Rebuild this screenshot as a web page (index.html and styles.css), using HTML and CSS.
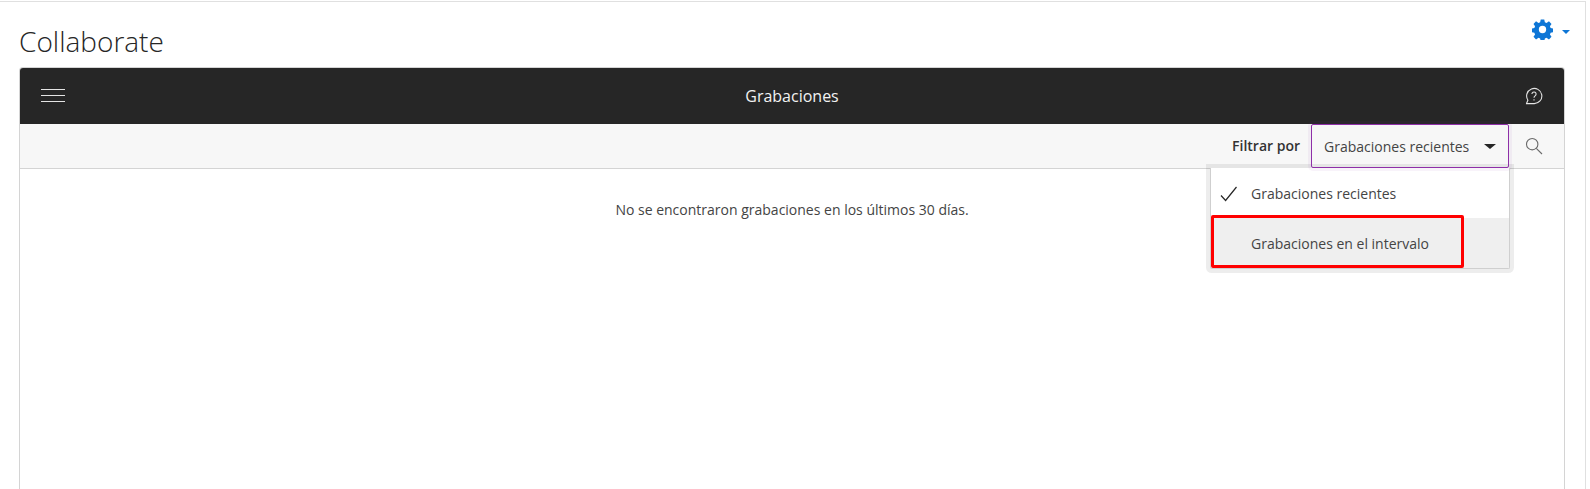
FILE: index.html
```html
<!DOCTYPE html>
<html lang="es">
<head>
    <meta charset="UTF-8">
    <meta name="viewport" content="width=device-width, initial-scale=1.0">
    <title>Collaborate</title>
    <link rel="stylesheet" href="styles.css">
</head>
<body>
    <div class="page">
        <div class="page-head">
            <h1>Collaborate</h1>
            <div class="settings">
                <svg class="gear" viewBox="0 0 24 24" width="21" height="21">
                    <path fill="#0e76d6" fill-rule="evenodd" d="M10 .5h4l.7 3.2 1.9.8 2.8-1.8 2.9 2.9-1.8 2.8.8 1.9 3.2.7v4l-3.2.7-.8 1.9 1.8 2.8-2.9 2.9-2.8-1.8-1.9.8-.7 3.2h-4l-.7-3.2-1.9-.8-2.8 1.8-2.9-2.9 1.8-2.8-.8-1.9-3.2-.7v-4l3.2-.7.8-1.9-1.8-2.8 2.9-2.9 2.8 1.8 1.9-.8zM12 7.8a4.2 4.2 0 1 0 0 8.4 4.2 4.2 0 0 0 0-8.4z"/>
                </svg>
                <span class="caret caret-blue"></span>
            </div>
        </div>

        <div class="panel">
            <div class="panel-header">
                <svg class="menu-icon" viewBox="0 0 24 14" width="24" height="14">
                    <path stroke="#e4e4e4" stroke-width="1" d="M0 .5h24M0 6.5h24M0 12.5h24"/>
                </svg>
                <div class="panel-title">Grabaciones</div>
                <svg class="help-icon" viewBox="0 0 18 18" width="18" height="18" fill="none" stroke="#e4e4e4" stroke-width="1.1">
                    <path d="M1.5 16.5l1.4-3.3A7.6 7.6 0 1 1 9 16.6H1.5z"/>
                    <path d="M6.9 7a2.1 2.1 0 1 1 3.2 1.9c-.7.5-1.1.9-1.1 1.8"/>
                    <path d="M9 12.2v1.3"/>
                </svg>
            </div>

            <div class="toolbar">
                <span class="filter-label">Filtrar por</span>
                <div class="filter-select">
                    <span>Grabaciones recientes</span>
                    <span class="caret caret-dark"></span>
                </div>
                <svg class="search-icon" viewBox="0 0 18 18" width="18" height="18" fill="none" stroke="#6a6a6a" stroke-width="1.1">
                    <circle cx="7.2" cy="7.2" r="5.7"/>
                    <path d="M11.3 11.3l5.7 5.7"/>
                </svg>
            </div>

            <div class="panel-body">
                <p class="empty-msg">No se encontraron grabaciones en los últimos 30 días.</p>

                <ul class="filter-menu">
                    <li class="menu-item">
                        <svg class="check" viewBox="0 0 18 16" width="18" height="16" fill="none" stroke="#262626" stroke-width="1.2">
                            <path d="M1 9.5l4.6 5L16.5 1"/>
                        </svg>
                        Grabaciones recientes
                    </li>
                    <li class="menu-item menu-item-hover">
                        Grabaciones en el intervalo
                        <div class="highlight"></div>
                    </li>
                </ul>
            </div>
        </div>
    </div>
</body>
</html>
```

FILE: styles.css
```css
* {
    box-sizing: border-box;
}
html, body {
    height: 100%;
    overflow: hidden;
}
body {
    margin: 0;
    font-family: "Open Sans", Arial, sans-serif;
    font-size: 14px;
    color: #333;
    background: #fff;
}
.page {
    height: 488px;
    width: 1586px;
    margin-top: 1px;
    padding: 0 20px 0 19px;
    border-top: 1px solid #e0e0e0;
    border-right: 1px solid #e0e0e0;
    display: flex;
    flex-direction: column;
}
.page-head {
    height: 65px;
    flex: none;
    display: flex;
    justify-content: space-between;
    align-items: flex-start;
}
h1 {
    margin: 20px 0 0;
    font-size: 28px;
    line-height: 38px;
    font-weight: 300;
    color: #262626;
}
.settings {
    display: flex;
    align-items: center;
    gap: 9px;
    margin-top: 17px;
    margin-right: -5px;
}
.caret {
    width: 0;
    height: 0;
    border-left: 4px solid transparent;
    border-right: 4px solid transparent;
}
.caret-blue {
    border-top: 4px solid #0e76d6;
    margin-top: 4px;
}
.caret-dark {
    border-left-width: 6px;
    border-right-width: 6px;
    border-top: 5px solid #262626;
}
.panel {
    flex: 1;
    display: flex;
    flex-direction: column;
    border: 1px solid #d4d4d4;
    border-bottom: 0;
    border-radius: 4px 4px 0 0;
}
.panel-header {
    height: 56px;
    flex: none;
    padding: 0 21px;
    display: flex;
    align-items: center;
    justify-content: space-between;
    position: relative;
    background: #262626;
    border-radius: 3px 3px 0 0;
}
.panel-title {
    position: absolute;
    left: 0;
    right: 0;
    text-align: center;
    color: #f2f2f2;
    font-size: 16px;
    font-weight: 500;
}
.toolbar {
    height: 45px;
    flex: none;
    padding-right: 21px;
    display: flex;
    align-items: flex-start;
    justify-content: flex-end;
    background: #f7f7f7;
    border-bottom: 1px solid #d4d4d4;
}
.filter-label {
    font-weight: 600;
    line-height: 44px;
    margin-right: 11px;
}
.filter-select {
    width: 198px;
    height: 44px;
    flex: none;
    padding: 0 12px;
    display: flex;
    align-items: center;
    justify-content: space-between;
    border: 1px solid #8e2fa8;
    border-radius: 2px;
    box-shadow: 0 0 0 3px rgba(142, 47, 168, 0.06);
    color: #444;
    position: relative;
    z-index: 2;
}
.search-icon {
    margin: 13px 0 0 16px;
}
.panel-body {
    flex: 1;
    position: relative;
    background: #fff;
}
.empty-msg {
    margin: 31px 0 0;
    text-align: center;
    line-height: 19px;
    color: #444;
}
.filter-menu {
    position: absolute;
    top: -1px;
    right: 54px;
    width: 300px;
    margin: 0;
    padding: 0;
    list-style: none;
    background: #fff;
    border: 1px solid #cfcfcf;
    border-top: 0;
    border-radius: 0 0 2px 2px;
    box-shadow: 0 0 0 4px rgba(0, 0, 0, 0.07);
    color: #444;
}
.menu-item {
    position: relative;
    height: 50px;
    padding-left: 40px;
    display: flex;
    align-items: center;
}
.menu-item-hover {
    background: #efefef;
}
.check {
    position: absolute;
    left: 9px;
    top: 18px;
}
.highlight {
    position: absolute;
    left: 0;
    top: -3px;
    width: 253px;
    height: 53px;
    border: 3px solid #f00;
    border-radius: 2px;
}
```
